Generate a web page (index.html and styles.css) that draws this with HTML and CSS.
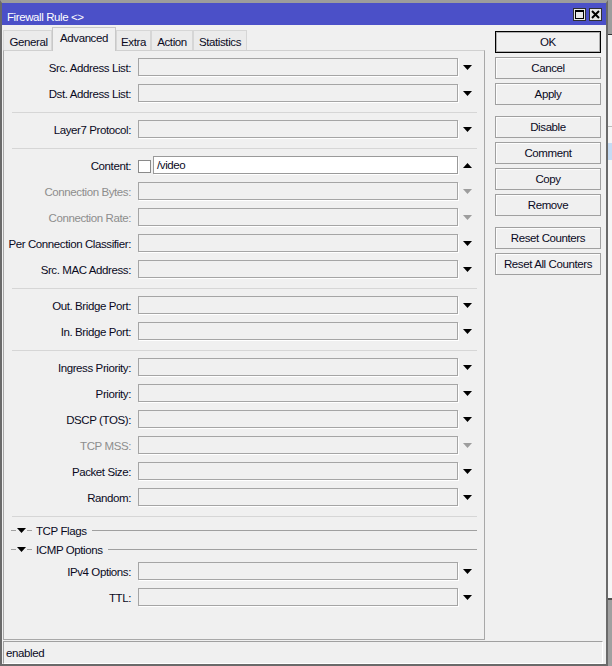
FILE: index.html
```html
<!DOCTYPE html>
<html>
<head>
<meta charset="utf-8">
<link rel="stylesheet" href="styles.css">
</head>
<body>
<div class="window">
  <div class="titlebar">
    <span class="title">Firewall Rule &lt;&gt;</span>
    <div class="tbtns">
      <span class="tbtn"><svg width="11" height="11" viewBox="0 0 11 11"><rect x="1.5" y="1.5" width="8" height="8" fill="none" stroke="#000" stroke-width="1"/><rect x="1" y="1" width="9" height="2" fill="#000"/></svg></span>
      <span class="tbtn"><svg width="11" height="11" viewBox="0 0 11 11"><path d="M2 2 L9 9 M9 2 L2 9" stroke="#000" stroke-width="2"/></svg></span>
    </div>
  </div>
  <div class="client">
    <div class="top">
      <div class="left">
        <div class="tabs">
          <span class="tab t1">General</span>
          <span class="tab active t2">Advanced</span>
          <span class="tab t3">Extra</span>
          <span class="tab t4">Action</span>
          <span class="tab t5">Statistics</span>
        </div>
        <div class="panel">
          <div class="row"><span class="lbl">Src. Address List:</span><span class="field"></span><svg class="arr" width="9" height="5"><polygon points="0,0 9,0 4.5,5"/></svg></div>
          <div class="row"><span class="lbl">Dst. Address List:</span><span class="field"></span><svg class="arr" width="9" height="5"><polygon points="0,0 9,0 4.5,5"/></svg></div>
          <div class="sep"></div>
          <div class="row"><span class="lbl">Layer7 Protocol:</span><span class="field"></span><svg class="arr" width="9" height="5"><polygon points="0,0 9,0 4.5,5"/></svg></div>
          <div class="sep"></div>
          <div class="row"><span class="lbl">Content:</span><span class="chk"></span><span class="field text">/video</span><svg class="arr" width="9" height="5"><polygon points="0,5 9,5 4.5,0"/></svg></div>
          <div class="row dis"><span class="lbl">Connection Bytes:</span><span class="field"></span><svg class="arr" width="9" height="5"><polygon points="0,0 9,0 4.5,5"/></svg></div>
          <div class="row dis"><span class="lbl">Connection Rate:</span><span class="field"></span><svg class="arr" width="9" height="5"><polygon points="0,0 9,0 4.5,5"/></svg></div>
          <div class="row"><span class="lbl">Per Connection Classifier:</span><span class="field"></span><svg class="arr" width="9" height="5"><polygon points="0,0 9,0 4.5,5"/></svg></div>
          <div class="row"><span class="lbl">Src. MAC Address:</span><span class="field"></span><svg class="arr" width="9" height="5"><polygon points="0,0 9,0 4.5,5"/></svg></div>
          <div class="sep"></div>
          <div class="row"><span class="lbl">Out. Bridge Port:</span><span class="field"></span><svg class="arr" width="9" height="5"><polygon points="0,0 9,0 4.5,5"/></svg></div>
          <div class="row"><span class="lbl">In. Bridge Port:</span><span class="field"></span><svg class="arr" width="9" height="5"><polygon points="0,0 9,0 4.5,5"/></svg></div>
          <div class="sep"></div>
          <div class="row"><span class="lbl">Ingress Priority:</span><span class="field"></span><svg class="arr" width="9" height="5"><polygon points="0,0 9,0 4.5,5"/></svg></div>
          <div class="row"><span class="lbl">Priority:</span><span class="field"></span><svg class="arr" width="9" height="5"><polygon points="0,0 9,0 4.5,5"/></svg></div>
          <div class="row"><span class="lbl">DSCP (TOS):</span><span class="field"></span><svg class="arr" width="9" height="5"><polygon points="0,0 9,0 4.5,5"/></svg></div>
          <div class="row dis"><span class="lbl">TCP MSS:</span><span class="field"></span><svg class="arr" width="9" height="5"><polygon points="0,0 9,0 4.5,5"/></svg></div>
          <div class="row"><span class="lbl">Packet Size:</span><span class="field"></span><svg class="arr" width="9" height="5"><polygon points="0,0 9,0 4.5,5"/></svg></div>
          <div class="row"><span class="lbl">Random:</span><span class="field"></span><svg class="arr" width="9" height="5"><polygon points="0,0 9,0 4.5,5"/></svg></div>
          <div class="sep"></div>
          <div class="group g1"><span class="dash d1"></span><svg class="gtri" width="9" height="5"><polygon points="0,0 9,0 4.5,5"/></svg><span class="dash d2"></span><span class="gtext">TCP Flags</span><span class="gline"></span></div>
          <div class="group g2"><span class="dash d1"></span><svg class="gtri" width="9" height="5"><polygon points="0,0 9,0 4.5,5"/></svg><span class="dash d2"></span><span class="gtext">ICMP Options</span><span class="gline"></span></div>
          <div class="row"><span class="lbl">IPv4 Options:</span><span class="field"></span><svg class="arr" width="9" height="5"><polygon points="0,0 9,0 4.5,5"/></svg></div>
          <div class="row"><span class="lbl">TTL:</span><span class="field"></span><svg class="arr" width="9" height="5"><polygon points="0,0 9,0 4.5,5"/></svg></div>
        </div>
      </div>
      <div class="buttons">
        <span class="btn default">OK</span>
        <span class="btn">Cancel</span>
        <span class="btn">Apply</span>
        <span class="btn gap">Disable</span>
        <span class="btn">Comment</span>
        <span class="btn">Copy</span>
        <span class="btn">Remove</span>
        <span class="btn gap">Reset Counters</span>
        <span class="btn">Reset All Counters</span>
      </div>
    </div>
    <div class="status">enabled</div>
  </div>
</div>
<div class="backdrop">
  <div class="bk b1"></div>
  <div class="bk b2"></div>
  <div class="bk b3"></div>
  <div class="bk b4"></div>
  <div class="bk b5"></div>
  <div class="bk b6"></div>
  <div class="bk b7"></div>
  <div class="bk b8"></div>
</div>
</body>
</html>
```

FILE: styles.css
```css
html, body {
  margin: 0;
  padding: 0;
}
body {
  width: 612px;
  height: 666px;
  overflow: hidden;
  display: flex;
  background: #a0a0a0;
  font-family: "Liberation Sans", Arial, sans-serif;
  font-size: 11.5px;
  letter-spacing: -0.4px;
  color: #0a0a1e;
}
.window {
  width: 608px;
  height: 666px;
  box-sizing: border-box;
  border: 2px solid #6a6a6a;
  border-top: 3px solid #9c9c9c;
  background: #f0f0f0;
  display: flex;
  flex-direction: column;
}
.titlebar {
  height: 22px;
  background: #4b50c8;
  display: flex;
  align-items: center;
  justify-content: space-between;
  color: #fff;
}
.title {
  padding-left: 5px;
  padding-top: 5px;
}
.tbtns {
  display: flex;
  gap: 3px;
  padding-right: 4px;
  padding-top: 1px;
}
.tbtn {
  width: 13px;
  height: 13px;
  box-sizing: border-box;
  border: 1px solid #303030;
  background: #e8e8e8;
  display: flex;
  align-items: center;
  justify-content: center;
}
.client {
  flex: 1;
  display: flex;
  flex-direction: column;
}
.top {
  height: 615px;
  display: flex;
}
.left {
  width: 482px;
  margin-left: 1px;
  padding-top: 2px;
  display: flex;
  flex-direction: column;
}
.tabs {
  height: 23px;
  display: flex;
  align-items: flex-end;
  position: relative;
  z-index: 1;
}
.tab {
  height: 20px;
  box-sizing: border-box;
  border: 1px solid #d6d6d6;
  border-bottom: none;
  background: #ebebeb;
  display: flex;
  align-items: center;
  justify-content: center;
  padding-top: 2px;
}
.tab.active {
  height: 24px;
  margin-bottom: -1px;
  background: #f0f0f0;
  border-color: #c8c8c8;
  padding-top: 0;
  padding-bottom: 3px;
}
.t1 { width: 49px; padding-left: 2px; }
.t2 { width: 64px; }
.t3 { width: 35px; }
.t4 { width: 42px; }
.t5 { width: 54px; }
.panel {
  height: 590px;
  box-sizing: border-box;
  border: 1px solid #a8a8a8;
  border-top-color: #d0d0d0;
  padding-top: 3px;
}
.row {
  height: 26px;
  display: flex;
  align-items: center;
}
.lbl {
  width: 127px;
  margin-right: 7px;
  text-align: right;
  white-space: nowrap;
  padding-top: 1px;
}
.field {
  width: 320px;
  height: 18px;
  box-sizing: border-box;
  border: 1px solid #a5a5a5;
  box-shadow: 1px 1px 0 #fff;
  background: #f0f0f0;
}
.field.text {
  width: 305px;
  background: #fff;
  border-color: #9a9a9a;
  padding-left: 3px;
  display: flex;
  align-items: center;
}
.chk {
  width: 11px;
  height: 11px;
  border: 1px solid #8a8a8a;
  background: #fff;
  margin-right: 2px;
  margin-top: 2px;
}
.arr {
  margin-left: 5px;
  fill: #000;
}
.dis .lbl { color: #8d8d8d; }
.dis .arr { fill: #9d9d9d; }
.sep {
  margin: 6px 7px 3px 8px;
  border-top: 1px solid #d6d6d6;
}
.group {
  display: flex;
  align-items: center;
  padding-right: 7px;
}
.g1 { height: 21px; }
.g2 { height: 17px; }
.dash {
  height: 1px;
  background: #a0a0a0;
}
.d1 { width: 5px; margin-left: 7px; margin-right: 1px; }
.d2 { width: 5px; margin-left: 1px; margin-right: 4px; }
.gtri { fill: #000; }
.gtext { white-space: nowrap; padding-top: 1px; }
.gline {
  flex: 1;
  height: 1px;
  background: #a0a0a0;
  margin-left: 5px;
}
.buttons {
  width: 106px;
  margin-left: 10px;
  padding-top: 6px;
  display: flex;
  flex-direction: column;
  gap: 4px;
}
.btn {
  height: 22px;
  box-sizing: border-box;
  border: 1px solid #a0a0a0;
  box-shadow: inset 1px 1px 0 #fdfdfd;
  background: #f0f0f0;
  display: flex;
  align-items: center;
  justify-content: center;
  white-space: nowrap;
}
.btn.default {
  border-color: #000;
  box-shadow: inset 0 0 0 1px #b0b0b0;
}
.btn.gap { margin-top: 7px; }
.status {
  height: 23px;
  box-sizing: border-box;
  margin: 1px 3px 0 1px;
  border: 1px solid #a0a0a0;
  border-right-color: #fff;
  border-bottom-color: #fff;
  padding-left: 2px;
  display: flex;
  align-items: center;
}
.backdrop {
  flex: 1;
  display: flex;
  flex-direction: column;
}
.b1 { height: 34px; background: #9d9d9d; }
.b2 { height: 1px; background: #333; }
.b3 { height: 91px; background: #f6f6f6; }
.b4 { height: 1px; background: #bbb; }
.b5 { height: 16px; background: #f6f6f6; }
.b6 { height: 17px; background: #c6dcf4; }
.b7 { height: 438px; background: #f6f6f6; }
.b8 { height: 2px; background: #505050; }
```
